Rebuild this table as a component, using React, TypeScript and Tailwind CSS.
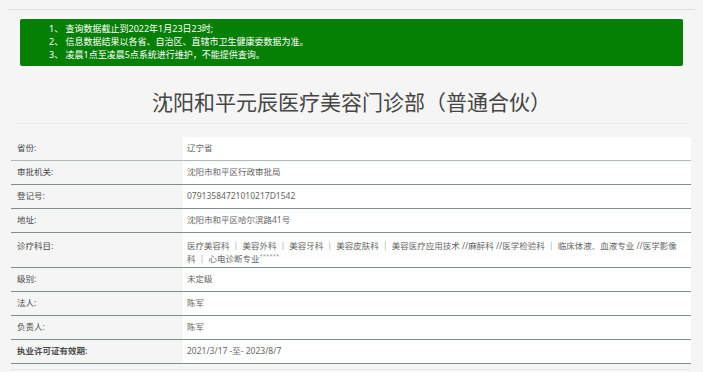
const rows: { label: string; value: React.ReactNode; h?: string; first?: boolean }[] = [
  { label: '省份:', value: '辽宁省', first: true },
  { label: '审批机关:', value: '沈阳市和平区行政审批局' },
  { label: '登记号:', value: '07913584721010217D1542' },
  { label: '地址:', value: '沈阳市和平区哈尔滨路41号' },
  {
    label: '诊疗科目:',
    h: 'h-[35px]',
    value: (
      <span className="block pt-[6px] leading-[13px]">
        医疗美容科 ｜ 美容外科 ｜ 美容牙科 ｜ 美容皮肤科 ｜ 美容医疗应用技术 //麻醉科 //医学检验科 ｜ 临床体液、血液专业 //医学影像科 ｜ 心电诊断专业
        <span className="inline-block align-top text-[6px] leading-[8px] text-[#999]">******</span>
      </span>
    ),
  },
  { label: '级别:', value: '未定级' },
  { label: '法人:', value: '陈军' },
  { label: '负责人:', value: '陈军' },
  { label: '执业许可证有效期:', value: '2021/3/17 -至- 2023/8/7' },
];

export default function App() {
  return (
    <div
      className="h-[372px] w-[703px] overflow-hidden bg-[#f5f5f5]"
      style={{ fontFamily: '"Noto Sans", "Noto Sans CJK SC", sans-serif' }}
    >
      {/* top rule */}
      <div className="mx-[8px] pt-[9px]">
        <div className="border-t border-[#dedede]" />
      </div>

      {/* notice */}
      <div className="ml-[20px] mt-[9px] h-[47px] w-[663px] rounded-[2px] bg-[#058005] pl-[29px] pt-[3px] text-[9px] leading-[13px] text-white">
        <p>1、 查询数据截止到2022年1月23日23时;</p>
        <p>2、 信息数据结果以各省、自治区、直辖市卫生健康委数据为准。</p>
        <p>3、 凌晨1点至凌晨5点系统进行维护，不能提供查询。</p>
      </div>

      {/* title */}
      <h1 className="mt-[24px] text-center text-[21px] leading-[24px] text-[#454545]">
        沈阳和平元辰医疗美容门诊部（普通合伙）
      </h1>
      <div className="mx-[16px] mt-[9px] border-t border-[#ececec]" />

      {/* table */}
      <div className="ml-[11px] mt-[13px] w-[680px] text-[8.5px]">
        {rows.map((r) => (
          <div
            key={r.label}
            className={`flex ${r.h ?? 'h-[24px]'} border-b ${r.first ? 'border-[#a9bdb5]' : 'border-[#7b918a]'}`}
          >
            <div
              className={`flex w-[172px] shrink-0 pl-[6px] text-[#4a4a4a] ${r.h ? 'pt-[6px] leading-[13px]' : 'items-center'} ${r.label.startsWith('执业') ? 'font-semibold' : ''}`}
            >
              {r.label}
            </div>
            <div className={`flex-1 bg-white pl-[4px] pr-[6px] text-[#666] ${r.h ? '' : 'flex items-center'}`}>
              {r.value}
            </div>
          </div>
        ))}
        <div className="mt-[5px] border-t border-[#e6e6e6]" />
      </div>
    </div>
  );
}
